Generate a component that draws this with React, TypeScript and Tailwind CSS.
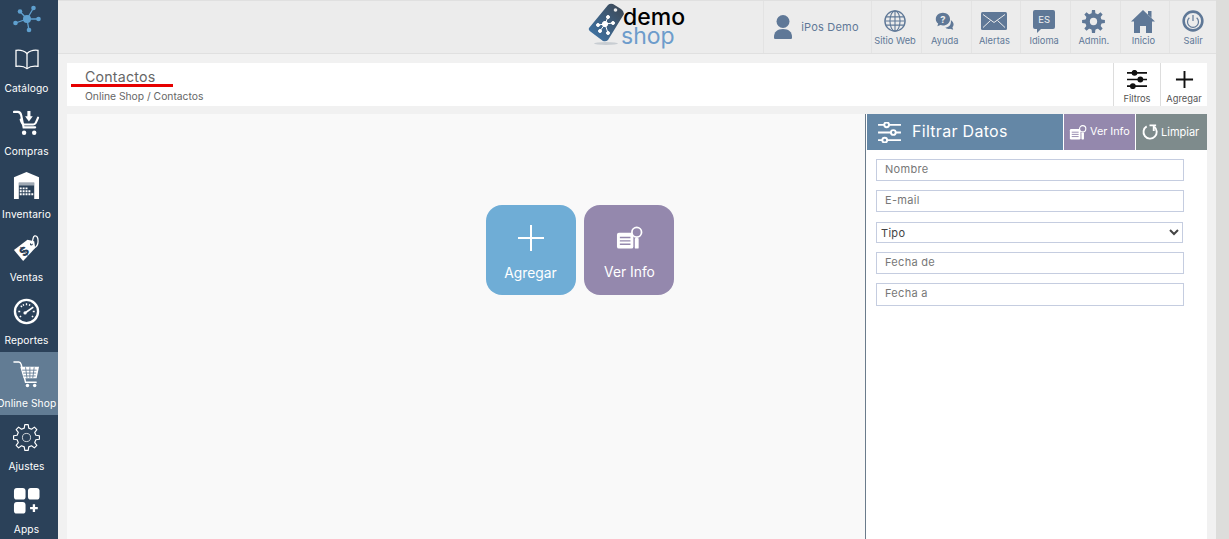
import type { ReactNode } from "react";

const gearPoints = (c: number, outer: number, inner: number, teeth: number) => {
  const pts: string[] = [];
  for (let i = 0; i < teeth; i++) {
    const step = (Math.PI * 2) / teeth;
    const a = i * step - Math.PI / 2;
    const offsets: [number, number][] = [
      [-0.3, inner],
      [-0.17, outer],
      [0.17, outer],
      [0.3, inner],
    ];
    offsets.forEach(([o, r]) => {
      const t = a + o * step;
      pts.push(`${(c + r * Math.cos(t)).toFixed(2)},${(c + r * Math.sin(t)).toFixed(2)}`);
    });
  }
  return pts.join(" ");
};

// sidebar icons
const BookIcon = () => (
  <svg viewBox="0 0 28 24" className="mt-[2px] w-[26px] h-[22px]" fill="none" stroke="#fff" strokeWidth="1.4">
    <path d="M14 6C11 3 6 2 2 2.5V20c4-.5 9 0 12 2.5 3-2.5 8-3 12-2.5V2.500C22 2 17 3 14 6Z" />
    <path d="M14 6v16" />
  </svg>
);

const CartDownIcon = () => (
  <svg viewBox="0 0 28 28" className="mt-px w-[27px] h-[27px]" fill="none" stroke="#fff" strokeWidth="2.200">
    <path d="M1 2h4c2 0 3 1.500 3.500 3.500L11 18h12" strokeLinecap="round" />
    <path d="M8 10c1 4 2 5 4 5h9c2 0 2.500-1 5-7" strokeLinecap="round" />
    <path d="M16.500 1v7" strokeWidth="3.200" />
    <path d="M12.500 6.500h8L16.500 12Z" fill="#fff" stroke="none" />
    <circle cx="11.500" cy="23.500" r="2.300" fill="#fff" stroke="none" />
    <circle cx="22" cy="23.500" r="2.300" fill="#fff" stroke="none" />
  </svg>
);

const WarehouseIcon = () => (
  <svg viewBox="0 0 28 28" className="w-[27px] h-[27px]">
    <path d="M14 0 27 5.500V28H1V5.500Z" fill="#fff" />
    <rect x="6" y="11" width="16" height="17" fill="#2b4159" />
    <rect x="6" y="11" width="16" height="3" fill="#fff" opacity=".55" />
    <path
      d="M7 16h2v2H7zM10 16h2v2h-2zM13 16h2v2h-2zM7 19h2v2H7zM10 19h2v2h-2zM13 19h2v2h-2zM7 22h2v2H7zM10 22h2v2h-2zM13 22h2v2h-2zM16 22h2v2h-2zM19 22h2v2h-2zM16 19h2v2h-2z"
      fill="#fff"
    />
  </svg>
);

const TagIcon = () => (
  <svg viewBox="0 0 28 28" className="w-[27px] h-[27px]">
    <path d="M1 15.500 15 5l7 1.500 1 7L10.500 27Z" fill="#fff" />
    <circle cx="19" cy="9.500" r="1.300" fill="#2b4159" />
    <path d="M19 9.500c2-2 1-8 3.500-8.500s3.500 2 3.500 5.500-2 6-4 7" fill="none" stroke="#fff" strokeWidth="1.300" />
    <text x="11.500" y="21.500" fontSize="13" fontWeight="800" fill="#2b4159" fontFamily="Inter, sans-serif" transform="rotate(-42 11.500 17)" textAnchor="middle">
      $
    </text>
  </svg>
);

const GaugeIcon = () => (
  <svg viewBox="0 0 28 28" className="w-[27px] h-[27px]" fill="none" stroke="#fff">
    <circle cx="14" cy="14" r="12" strokeWidth="2.400" />
    <path d="M14 5.500v2M8 8l1.400 1.400M5.500 14h2M20.500 14h2M7 19.500l1.500-.8M21 19.500l-1.500-.8M10.500 6.500l.6 1.600M17.500 6.500l-.6 1.600" strokeWidth="1.400" />
    <path d="M12.500 15.500 21 9.500" strokeWidth="1.800" />
    <circle cx="12.500" cy="15.500" r="1.700" fill="#fff" stroke="none" />
  </svg>
);

const ShopIcon = () => (
  <svg viewBox="0 0 28 28" className="w-[27px] h-[27px]" fill="none" stroke="#fff">
    <path d="M1 1h5c1.500 0 2 1 2.500 2.500L13 22h11" strokeWidth="1.500" strokeLinecap="round" />
    <path d="M7.500 6H27l-2.500 12H11Z" fill="#fff" stroke="none" />
    <path d="M9.500 9.500h15M10.500 12.500h13.500M11 15.500h12.500M13 6.500l1.500 11M17.500 6.500v11M22 6.500l-1.500 11" stroke="#627c94" strokeWidth=".9" />
    <circle cx="15" cy="25.500" r="1.800" fill="#fff" stroke="none" />
    <circle cx="22.500" cy="25.500" r="1.800" fill="#fff" stroke="none" />
  </svg>
);

const GearOutlineIcon = () => (
  <svg viewBox="0 0 28 28" className="w-[27px] h-[27px]" fill="none" stroke="#fff" strokeWidth="1.200">
    <polygon points={gearPoints(14, 13.500, 10, 8)} strokeLinejoin="round" />
    <circle cx="14" cy="14" r="4.200" strokeWidth="1" opacity=".8" />
  </svg>
);

const AppsIcon = () => (
  <svg viewBox="0 0 28 28" className="w-[27px] h-[27px]" fill="#fff">
    <rect x="1" y="1" width="12" height="12" rx="3" />
    <rect x="15.500" y="1" width="12" height="12" rx="3" />
    <rect x="1" y="15.500" width="12" height="12" rx="3" />
    <path d="M20.500 18h2.400v2.800h2.800v2.400h-2.800V26h-2.400v-2.800h-2.800v-2.400h2.800Z" />
  </svg>
);

// topbar icons
const C = "#5f7897";

const GlobeIcon = () => (
  <svg viewBox="0 0 24 24" className="w-[22px] h-[22px]" fill="none" stroke={C} strokeWidth="1.200">
    <circle cx="12" cy="12" r="11" strokeWidth="1.500" />
    <ellipse cx="12" cy="12" rx="5.500" ry="11" />
    <path d="M12 1v22M2 7.500h20M1 12h22M2 16.500h20" />
  </svg>
);

const HelpIcon = () => (
  <svg viewBox="0 0 24 24" className="w-[19px] h-[19px]" fill={C}>
    <path d="M10 1c5 0 9 3.500 9 8s-4 8-9 8c-1 0-2 0-3-.5L3 18l1-3.500C2 13 1 11 1 9c0-4.500 4-8 9-8Z" />
    <path d="M20 10c2 1.500 3.500 3.500 3.500 5.500 0 1.500-.5 2.800-1.500 3.800l1 3.200-4-1.500c-1 .3-2 .5-3 .3-1-.2-2-.8-3-1.800 4 0 8-3 7-9.500Z" />
    <text x="10" y="13.500" fontSize="12" fontWeight="700" fill="#ececec" textAnchor="middle" fontFamily="Inter, sans-serif">
      ?
    </text>
  </svg>
);

const MailIcon = () => (
  <svg viewBox="0 0 26 18" className="w-[26px] h-[18px]">
    <rect width="26" height="18" rx="1.500" fill={C} />
    <path d="M2 2.500 13 10.500 24 2.500M2 15.500l7.500-7M24 15.500l-7.500-7" fill="none" stroke="#ececec" strokeWidth="1" />
  </svg>
);

const LangIcon = () => (
  <div className="relative -mt-[3px] w-[22px] h-[19px] rounded-[2px] bg-[#5f7897] flex items-center justify-center text-[9.500px] leading-none text-[#f2f2f2]">
    ES
    <div className="absolute left-[4px] top-[18px] w-0 h-0 border-t-[5px] border-r-[5px] border-t-[#5f7897] border-r-transparent" />
  </div>
);

const AdminIcon = () => (
  <svg viewBox="0 0 24 24" className="w-[23px] h-[23px]">
    <polygon points={gearPoints(12, 12, 8.500, 8)} fill={C} />
    <circle cx="12" cy="12" r="8.500" fill={C} />
    <circle cx="12" cy="12" r="3.800" fill="#ececec" />
  </svg>
);

const HomeIcon = () => (
  <svg viewBox="0 0 24 24" className="w-[24px] h-[24px]" fill={C}>
    <path d="M12 1 24 12.500h-3V24h-6v-7H9v7H3V12.500H0Z" />
    <path d="M17 2h3.500v7L17 5.500Z" />
  </svg>
);

const PowerIcon = () => (
  <svg viewBox="0 0 24 24" className="w-[22px] h-[22px]" fill="none" stroke={C}>
    <circle cx="12" cy="12" r="10.200" strokeWidth="2.800" />
    <path d="M8 8.500a6 6 0 1 0 8 0" strokeWidth="1.300" />
    <path d="M12 5.500V12" strokeWidth="1.300" />
  </svg>
);

const SlidersIcon = ({ color, knob }: { color: string; knob: string }) => (
  <svg viewBox="0 0 24 22" className="w-full h-full" fill="none" stroke={color} strokeWidth="2">
    <path d="M0 3h24M0 11h24M0 19h24" />
    <circle cx="9" cy="3" r="2.500" fill={knob} />
    <circle cx="16" cy="11" r="2.500" fill={knob} />
    <circle cx="7" cy="19" r="2.500" fill={knob} />
  </svg>
);

const InfoIcon = ({ bg }: { bg: string }) => (
  <svg viewBox="0 0 28 24" className="w-full h-full">
    <rect x="1" y="6.500" width="17" height="16.500" rx="2" fill="#fff" />
    <path d="M4 11.500h11M4 15h11M4 18.500h11" stroke={bg} strokeWidth="1.500" />
    <circle cx="21.500" cy="6" r="5" fill={bg} stroke="#fff" strokeWidth="1.800" />
    <rect x="19.500" y="12" width="4" height="11" rx="1" fill="#fff" />
  </svg>
);

const sideItems: { label: string; icon: ReactNode; active?: boolean }[] = [
  { label: "Catálogo", icon: <BookIcon /> },
  { label: "Compras", icon: <CartDownIcon /> },
  { label: "Inventario", icon: <WarehouseIcon /> },
  { label: "Ventas", icon: <TagIcon /> },
  { label: "Reportes", icon: <GaugeIcon /> },
  { label: "Online Shop", icon: <ShopIcon />, active: true },
  { label: "Ajustes", icon: <GearOutlineIcon /> },
  { label: "Apps", icon: <AppsIcon /> },
];

const topItems: { label: string; icon: ReactNode }[] = [
  { label: "Sitio Web", icon: <GlobeIcon /> },
  { label: "Ayuda", icon: <HelpIcon /> },
  { label: "Alertas", icon: <MailIcon /> },
  { label: "Idioma", icon: <LangIcon /> },
  { label: "Admin.", icon: <AdminIcon /> },
  { label: "Inicio", icon: <HomeIcon /> },
  { label: "Salir", icon: <PowerIcon /> },
];

const inputClass =
  "block w-[308px] h-[22px] border border-[#c5cde0] bg-white px-2 pb-[2px] text-[11px] tracking-[0.3px] text-[#555] placeholder:text-[#777] outline-none";

export default function App() {
  return (
    <div className="flex h-[539px] w-[1229px] overflow-hidden bg-[#dddddb] font-['Inter',sans-serif]">
      <div className="flex h-full w-[1216px] overflow-hidden">
        {/* Sidebar */}
        <aside className="w-[58px] shrink-0 bg-[#2b4159] text-white">
          <div className="flex h-[37px] items-start justify-center pt-[5px] pr-[5px]">
            <svg viewBox="0 0 28 28" className="w-[28px] h-[28px]" fill="#5fa0cf" stroke="#5fa0cf">
              <path d="M14 14 7 6.500M14 14l6.500-11M14 14h11.500M14 14l2 11.500M14 14 2.500 18" strokeWidth="1.300" />
              <circle cx="14" cy="14" r="4" stroke="none" />
              <circle cx="7" cy="6.500" r="2.300" stroke="none" />
              <circle cx="20.500" cy="3" r="2.300" stroke="none" />
              <circle cx="25.500" cy="14" r="2.300" stroke="none" />
              <circle cx="16" cy="25" r="2.300" stroke="none" />
              <circle cx="2.500" cy="18" r="2.300" stroke="none" />
            </svg>
          </div>
          {sideItems.map((item) => (
            <div
              key={item.label}
              className={`flex h-[63px] flex-col items-center pt-[9px] pr-[5px] ${item.active ? "bg-[#627c94]" : ""}`}
            >
              <div className="flex h-[29px] items-start justify-center">{item.icon}</div>
              <div className="mt-[6px] whitespace-nowrap text-[10.200px] leading-[14px] tracking-[0.1px]">{item.label}</div>
            </div>
          ))}
        </aside>

        <main className="flex min-w-0 flex-1 flex-col bg-[#f1f1f1]">
          {/* Top bar */}
          <header className="flex h-[54px] shrink-0 items-stretch border-y border-[#e0e0e0] bg-[#ececec] pl-[530px]">
            <div className="flex items-start">
              <svg viewBox="0 0 36 44" className="mt-[2px] h-[44px] w-[36px] overflow-visible">
                <defs>
                  <linearGradient id="tag" x1="0" y1="1" x2="1" y2="0">
                    <stop offset="0" stopColor="#3f78ad" />
                    <stop offset="1" stopColor="#3c4550" />
                  </linearGradient>
                </defs>
                <path d="M1 25 20 2Q22 0 25 1L33 6Q36 8 36 11L20 37Q18 39 15 38L3 29Q0 27 1 25Z" fill="url(#tag)" />
                <ellipse cx="18" cy="40.500" rx="12" ry="1.500" fill="#c8cdd2" />
                <g fill="#fff" stroke="#fff">
                  <path d="M17 21 10 22M17 21l3-7M17 21l8-1M17 21l-5 7M17 21l3 9" strokeWidth="1" />
                  <circle cx="17" cy="21" r="2.600" />
                  <circle cx="10" cy="22" r="1.500" />
                  <circle cx="20" cy="14" r="1.500" />
                  <circle cx="25" cy="20" r="1.500" />
                  <circle cx="12" cy="28" r="1.500" />
                  <circle cx="20" cy="30" r="1.500" />
                </g>
                <circle cx="27.500" cy="7" r="1.800" fill="#ececec" />
              </svg>
              <div className="-ml-[1px] pt-[7px] text-[23px] font-medium leading-[19px] tracking-[0px]">
                <div className="text-black">demo</div>
                <div className="-ml-[2px] font-normal text-[#6d9ccb]">shop</div>
              </div>
            </div>

            <div className="ml-auto -mr-[3px] flex">
              <div className="flex w-[108px] items-center border-l border-[#e3e3e3] pl-[10px]">
                <svg viewBox="0 0 18 24" className="h-[24px] w-[18px]" fill={C}>
                  <circle cx="9" cy="6.500" r="6.500" />
                  <path d="M1 24c-1 0-1-1-1-2 0-5 3-8 9-8s9 3 9 8c0 1 0 2-1 2Z" />
                </svg>
                <span className="ml-[9px] whitespace-nowrap text-[11px] tracking-[0.2px] text-[#5f7897]">iPos Demo</span>
              </div>
              {topItems.map((item) => (
                <div key={item.label} className="flex w-[49.700px] shrink-0 flex-col items-center border-l border-[#e3e3e3] pr-[3px] pt-[8px]">
                  <div className="flex h-[24px] items-center justify-center">{item.icon}</div>
                  <div className="mt-[2px] whitespace-nowrap text-[9.300px] leading-[12px] text-[#5f7897]">{item.label}</div>
                </div>
              ))}
            </div>
          </header>

          <div className="flex min-h-0 flex-1 flex-col pl-[9px] pr-[9px] pt-[9px]">
            {/* Title bar */}
            <div className="relative flex h-[43px] shrink-0 items-stretch bg-white">
              <div className="flex-1 pl-[18px] pt-[6px]">
                <div className="text-[14.200px] leading-[16px] tracking-[0.2px] text-[#666]">Contactos</div>
                <div className="mt-[5px] text-[10.300px] leading-[12px] text-[#666]">Online Shop / Contactos</div>
              </div>
              <div className="absolute left-[4px] top-[21px] h-[3px] w-[102px] bg-[#e60000]" />
              <div className="flex w-[47px] flex-col items-center border-l border-[#ddd] pt-[7px]">
                <div className="h-[19px] w-[20px]">
                  <SlidersIcon color="#111" knob="#111" />
                </div>
                <div className="mt-[4px] text-[9.300px] leading-[12px] text-[#555]">Filtros</div>
              </div>
              <div className="flex w-[47px] flex-col items-center border-l border-[#ddd] pt-[7px]">
                <svg viewBox="0 0 20 20" className="h-[19px] w-[19px]" stroke="#111" strokeWidth="2">
                  <path d="M10 1v18M1 10h18" />
                </svg>
                <div className="mt-[4px] text-[9.300px] leading-[12px] text-[#555]">Agregar</div>
              </div>
            </div>

            <div className="mt-[8px] flex min-h-0 flex-1">
              {/* Quick actions */}
              <section className="flex-1 bg-[#f9f9f9] pl-[419px] pt-[91px]">
                <div className="flex gap-[8px]">
                  <div className="flex h-[90px] w-[90px] flex-col items-center rounded-[16px] bg-[#6fadd6] pt-[19px] pr-px text-white">
                    <svg viewBox="0 0 28 28" className="h-[28px] w-[28px]" stroke="#fff" strokeWidth="2">
                      <path d="M14 1v26M1 14h26" />
                    </svg>
                    <div className="mt-[13px] text-[13.800px] leading-[16px]">Agregar</div>
                  </div>
                  <div className="flex h-[90px] w-[90px] flex-col items-center rounded-[16px] bg-[#9488ad] pt-[21px] pl-px text-white">
                    <div className="h-[24px] w-[27px]">
                      <InfoIcon bg="#9488ad" />
                    </div>
                    <div className="mt-[14px] text-[13.800px] leading-[16px]">Ver Info</div>
                  </div>
                </div>
              </section>

              {/* Filter panel */}
              <section className="w-[342px] shrink-0 border-l border-[#6b7c8c] bg-white">
                <div className="flex h-[36px] pl-px text-white">
                  <div className="flex w-[196px] items-center bg-[#6487a6] pl-[11px]">
                    <div className="h-[21px] w-[23px]">
                      <SlidersIcon color="#fff" knob="#6487a6" />
                    </div>
                    <span className="ml-[11px] -mt-[2px] text-[16px] tracking-[0.3px]">Filtrar Datos</span>
                  </div>
                  <div className="ml-px flex w-[71px] items-center bg-[#9488ad] pl-[5px]">
                    <div className="h-[15px] w-[18px]">
                      <InfoIcon bg="#9488ad" />
                    </div>
                    <span className="ml-[3px] whitespace-nowrap text-[10.800px]">Ver Info</span>
                  </div>
                  <div className="ml-px flex w-[71px] items-center bg-[#7e8b8c] pl-[5px]">
                    <svg viewBox="0 0 18 18" className="h-[17px] w-[17px]" fill="none" stroke="#fff" strokeWidth="2">
                      <path d="M6 2.500A7 7 0 1 0 14 3" />
                      <path d="M9 1.500h7M13.500 1.500v6" />
                    </svg>
                    <span className="ml-[3px] whitespace-nowrap text-[11px]">Limpiar</span>
                  </div>
                </div>
                <form className="flex flex-col pl-[10px] pt-[9px]">
                  <input className={inputClass} placeholder="Nombre" />
                  <input className={`${inputClass} mt-[9px]`} placeholder="E-mail" />
                  <select
                    defaultValue="Tipo"
                    className="mt-[10px] block h-[21px] w-[307px] border border-[#c5cde0] bg-white px-0 text-[11px] tracking-[0.3px] text-[#444] outline-none"
                  >
                    <option>Tipo</option>
                  </select>
                  <input className={`${inputClass} mt-[9px]`} placeholder="Fecha de" />
                  <input className={`${inputClass} mt-[9px] h-[23px] pb-[3px]`} placeholder="Fecha a" />
                </form>
              </section>
            </div>
          </div>
        </main>
      </div>
    </div>
  );
}
